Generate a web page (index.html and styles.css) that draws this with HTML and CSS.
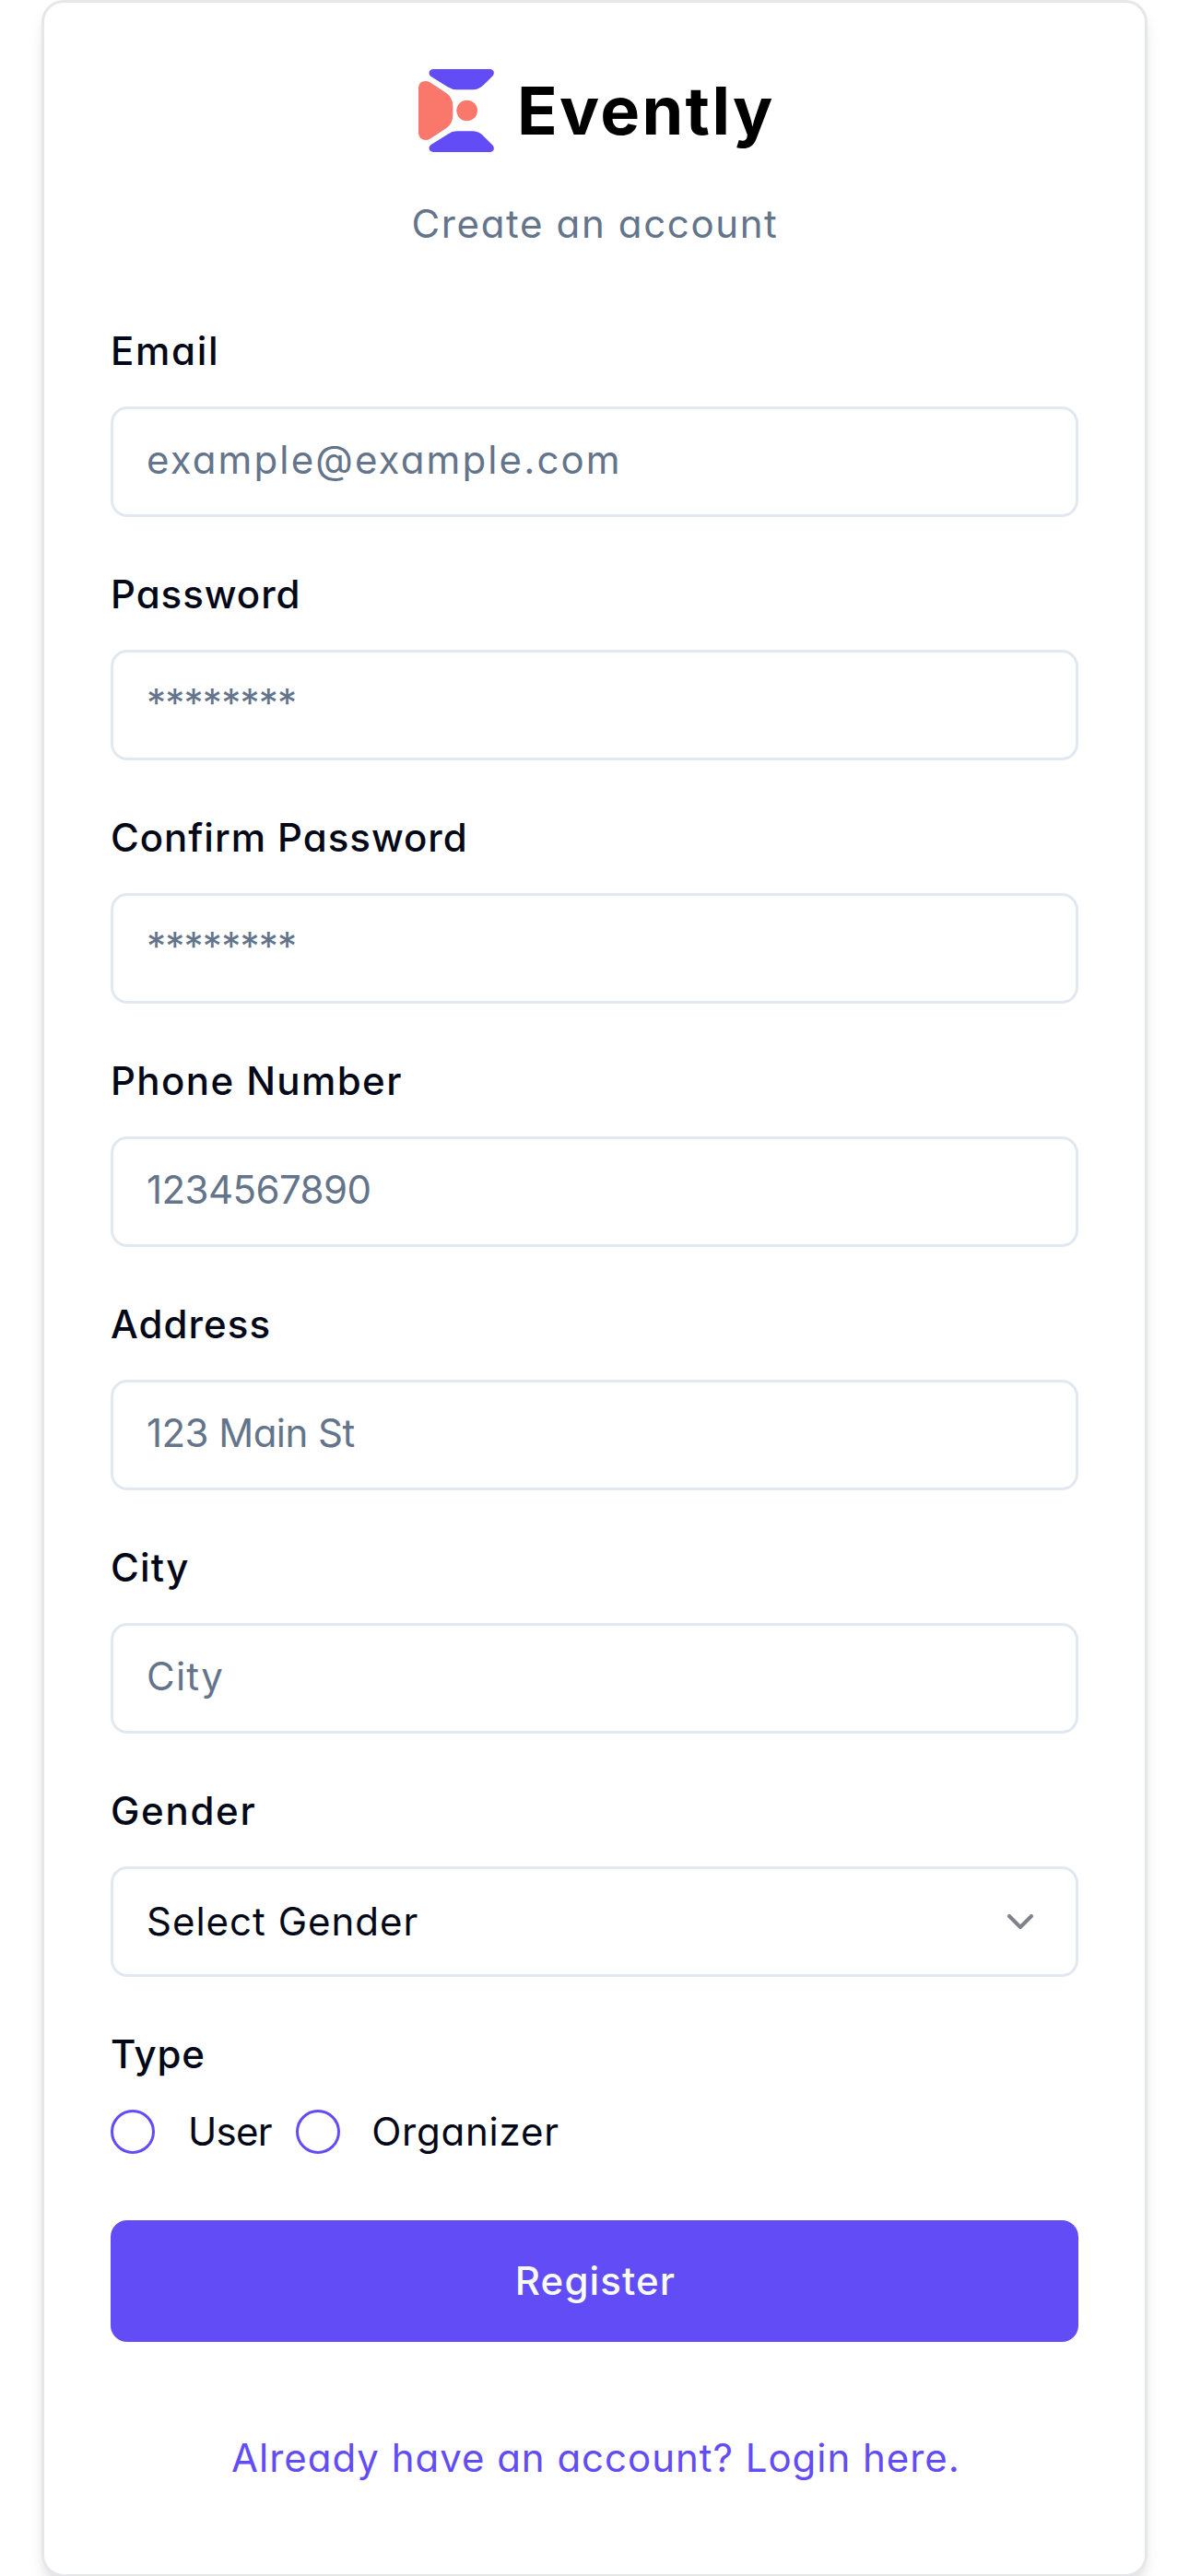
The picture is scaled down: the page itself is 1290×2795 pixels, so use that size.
FILE: index.html
```html
<!DOCTYPE html>
<html lang="en">
<head>
<meta charset="utf-8">
<title>Evently - Create an account</title>
<link rel="stylesheet" href="styles.css">
</head>
<body>
<main class="card">
  <header class="header">
    <div class="logo">
      <svg class="logo-mark" viewBox="69 75 246 270" aria-hidden="true">
        <path class="violet" d="M118 75H301C315 75 319 89 309 99L284 124Q266 142 247 142H194Q178 142 164 133L110 99C98 90 104 75 118 75Z"/>
        <path class="violet" d="M118 345H301C315 345 319 331 309 321L284 296Q266 277 247 277H194Q178 277 164 287L110 321C98 330 104 345 118 345Z"/>
        <path class="coral" d="M69 136Q70 114 92 114Q100 114 106 118L160 153Q181 168 181 196V224Q181 252 160 267L106 302Q100 306 92 306Q70 304 69 283Z"/>
        <circle class="coral" cx="227" cy="210" r="34"/>
      </svg>
      <span class="logo-word">Evently</span>
    </div>
    <p class="subtitle">Create an account</p>
  </header>
  <form class="form">
    <div class="field">
      <label class="label label-email" for="email">Email</label>
      <input class="input input-email" id="email" type="email" placeholder="example@example.com">
    </div>
    <div class="field">
      <label class="label label-password" for="password">Password</label>
      <input class="input input-secret" id="password" type="password" placeholder="********">
    </div>
    <div class="field">
      <label class="label label-password" for="confirm">Confirm Password</label>
      <input class="input input-secret" id="confirm" type="password" placeholder="********">
    </div>
    <div class="field">
      <label class="label label-phone" for="phone">Phone Number</label>
      <input class="input input-phone" id="phone" type="tel" placeholder="1234567890">
    </div>
    <div class="field">
      <label class="label label-address" for="address">Address</label>
      <input class="input input-address" id="address" type="text" placeholder="123 Main St">
    </div>
    <div class="field">
      <label class="label label-city" for="city">City</label>
      <input class="input input-city" id="city" type="text" placeholder="City">
    </div>
    <div class="field">
      <span class="label label-gender">Gender</span>
      <button class="select" type="button">
        <span>Select Gender</span>
        <svg class="chevron" viewBox="0 0 24 24" aria-hidden="true"><path d="m6 9 6 6 6-6"/></svg>
      </button>
    </div>
    <div class="field">
      <span class="label label-type">Type</span>
      <div class="radios">
        <label class="option option-user"><span class="radio"></span>User</label>
        <label class="option option-organizer"><span class="radio"></span>Organizer</label>
      </div>
    </div>
    <button class="submit" type="button">Register</button>
  </form>
  <a class="login">Already have an account? Login here.</a>
</main>
</body>
</html>
```
FILE: styles.css
```css
* {
  box-sizing: border-box;
}

html {
  overflow: hidden;
}

body {
  margin: 0;
  padding: 0 45px;
  background: #fff;
  color: #020817;
  font: 400 42px/42px Inter, sans-serif;
  font-feature-settings: "cv11";
}

button,
input {
  margin: 0;
  font: inherit;
  font-feature-settings: inherit;
  color: inherit;
}

.card {
  display: flex;
  flex-direction: column;
  height: 2796px;
  padding: 72px 72px 105px;
  border: 3px solid #e5e7eb;
  border-radius: 24px;
  background: #fff;
  box-shadow: 0 12px 18px -3px rgba(0, 0, 0, 0.1), 0 6px 12px -6px rgba(0, 0, 0, 0.1);
}

.header {
  display: flex;
  flex-direction: column;
  align-items: center;
  gap: 57px;
}

.logo {
  display: flex;
  align-items: center;
  gap: 25px;
}

.logo-mark {
  width: 82px;
  height: 90px;
}

.violet {
  fill: #624cf5;
}

.coral {
  fill: #fa776c;
}

.logo-word {
  margin-right: -4.6px;
  color: #000;
  font-size: 72px;
  font-weight: 700;
  line-height: 88px;
  letter-spacing: 2.3px;
}

.subtitle {
  margin: 0;
  padding-left: 1px;
  color: #64748b;
  letter-spacing: 1.63px;
}

.form {
  display: flex;
  flex-direction: column;
  gap: 63px;
  margin-top: 96px;
}

.field {
  display: flex;
  flex-direction: column;
  gap: 39px;
}

.label {
  font-weight: 500;
}

.label-email { letter-spacing: 1.69px; }
.label-password { letter-spacing: 0.97px; }
.label-phone { letter-spacing: 1.41px; }
.label-address { letter-spacing: 1.07px; }
.label-city { letter-spacing: 1.2px; }
.label-gender { letter-spacing: 1.69px; }
.label-type { letter-spacing: 0.74px; }

.input,
.select {
  width: 100%;
  height: 120px;
  padding: 0 36px;
  border: 3px solid #e2e8f0;
  border-radius: 18px;
  background: #fff;
}

.input {
  padding-bottom: 6px;
}

.input::placeholder {
  color: #64748b;
  opacity: 1;
}

.input-email { letter-spacing: 2.12px; }
.input-secret { letter-spacing: -0.75px; }
.input-phone { letter-spacing: -0.56px; }
.input-address { letter-spacing: -0.54px; }
.input-city { letter-spacing: 1.25px; }

.select {
  display: flex;
  align-items: center;
  justify-content: space-between;
  letter-spacing: 1px;
}

.chevron {
  width: 48px;
  height: 48px;
  fill: none;
  stroke: currentColor;
  stroke-width: 2;
  stroke-linecap: round;
  stroke-linejoin: round;
  opacity: 0.5;
}

.radios {
  display: flex;
  gap: 26px;
}

.option {
  display: flex;
  align-items: center;
  gap: 36px;
}

.option-user { letter-spacing: -0.75px; }

.option-organizer {
  gap: 34.5px;
  letter-spacing: 0.77px;
}

.radio {
  width: 48px;
  height: 48px;
  border: 3px solid #624cf5;
  border-radius: 50%;
}

.submit {
  height: 132px;
  margin-top: 9px;
  padding: 0 0 0 2px;
  border: 0;
  border-radius: 18px;
  background: #624cf5;
  color: #f8fafc;
  font-weight: 500;
  letter-spacing: 1.12px;
}

.login {
  margin-top: 105px;
  padding-left: 3px;
  color: #624cf5;
  letter-spacing: 0.97px;
  text-align: center;
}
```
